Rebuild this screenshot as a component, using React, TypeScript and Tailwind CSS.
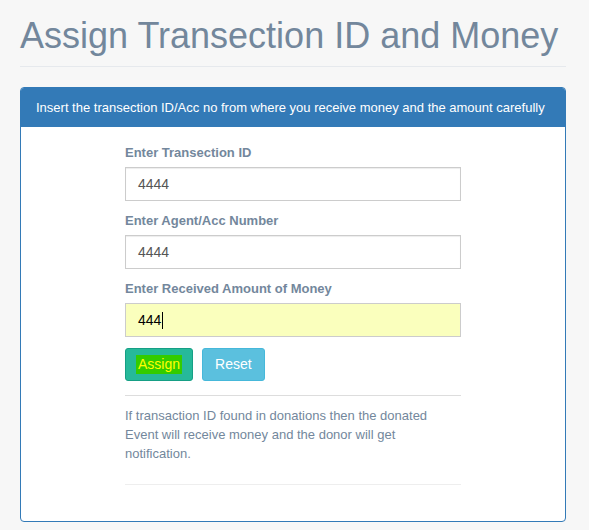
import React from "react";

export default function App() {
  const font = { fontFamily: '"Liberation Sans", Arial, sans-serif' };
  return (
    <div className="min-h-[530px] w-full bg-[#f7f7f7] text-[#73879c]" style={font}>
      <div className="mx-[20px] w-[546px] border-b border-[#e6e9ed] pt-[16px] pb-[10px]">
        <h1 className="m-0 text-[36px] leading-[40px] font-normal text-[#73879c] whitespace-nowrap">
          Assign Transection ID and Money
        </h1>
      </div>
      <div className="mx-[20px] mt-[20px] w-[546px] rounded-[4px] border border-[#337ab7] bg-white overflow-hidden">
        <div className="bg-[#337ab7] px-[15px] py-[10px] text-[13px] leading-[19px] text-white whitespace-nowrap">
          Insert the transection ID/Acc no from where you receive money and the amount carefully
        </div>
        <div className="flex justify-center pt-[16px] pb-[36px]">
          <div className="w-[336px]">
            <div className="mb-[10px]">
              <div className="mb-[5px] text-[13px] leading-[19px] font-bold text-[#73879c]">Enter Transection ID</div>
              <div className="flex h-[34px] items-center border border-[#ccc] bg-white px-[12px] text-[14px] text-[#555] shadow-[inset_0_1px_1px_rgba(0,0,0,0.075)]">
                4444
              </div>
            </div>
            <div className="mb-[10px]">
              <div className="mb-[5px] text-[13px] leading-[19px] font-bold text-[#73879c]">Enter Agent/Acc Number</div>
              <div className="flex h-[34px] items-center border border-[#ccc] bg-white px-[12px] text-[14px] text-[#555] shadow-[inset_0_1px_1px_rgba(0,0,0,0.075)]">
                4444
              </div>
            </div>
            <div className="mb-[11px]">
              <div className="mb-[5px] text-[13px] leading-[19px] font-bold text-[#73879c]">Enter Received Amount of Money</div>
              <div className="flex h-[34px] items-center border border-[#ccc] bg-[#faffbd] px-[12px] text-[14px] text-black">
                444<span className="ml-[1px] inline-block h-[17px] w-[1px] bg-black" />
              </div>
            </div>
            <div className="flex gap-[9px]">
              <div className="flex h-[33px] items-center rounded-[3px] border border-[#169f85] bg-[#26b99a] pl-[10px] pr-[10px] text-[14px] text-white">
                <span className="bg-[#33cc00] px-[2px] leading-[19px] text-[#ffff00]">Assign</span>
              </div>
              <div className="flex h-[33px] items-center rounded-[3px] border border-[#46b8da] bg-[#5bc0de] px-[12px] text-[14px] text-white">
                Reset
              </div>
            </div>
            <div className="mt-[14px] border-t border-[#ddd]" />
            <p className="mt-[10px] text-[13px] leading-[19px] text-[#73879c]">
              If transaction ID found in donations then the donated Event will receive money and the donor will get notification.
            </p>
            <div className="mt-[21px] border-t border-[#eee]" />
          </div>
        </div>
      </div>
    </div>
  );
}
